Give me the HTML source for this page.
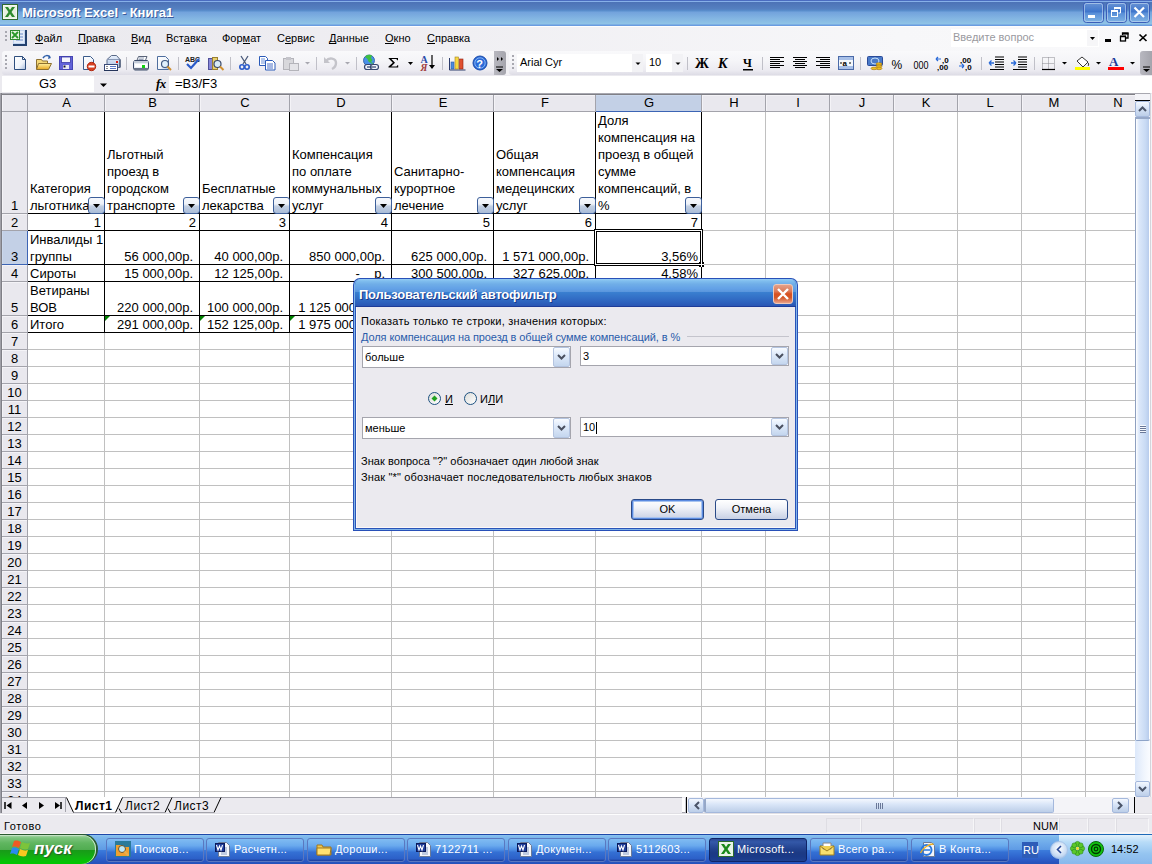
<!DOCTYPE html><html><head><meta charset="utf-8"><style>
*{box-sizing:border-box}
body{margin:0;width:1152px;height:864px;overflow:hidden;position:relative;background:#EBEAEF;font-family:"Liberation Sans",sans-serif;font-size:13px;color:#000}
.a{position:absolute}
.t{position:absolute;white-space:nowrap;line-height:17px}
.s{position:absolute;white-space:nowrap;line-height:15px;font-size:11px}
u{text-decoration:none;position:relative}u::after{content:'';position:absolute;left:0;right:0;bottom:0px;height:1px;background:currentColor}
svg{position:absolute;overflow:visible}
</style></head><body>
<div class="a" style="left:0;top:0;width:1152px;height:26px;background:linear-gradient(#4A6CC0 0,#4A6CC0 1px,#86B0E8 1px,#86B0E8 2px,#4C72B6 2px,#5580C0 9px,#5A90CE 11px,#72A2DC 12px,#82B4E2 18px,#90C4E6 24px,#6A9CE0 25px)"></div>
<div class="t" style="left:22px;top:4px;color:#fff;font-weight:bold;font-size:13px;text-shadow:1px 1px 0 #3A5A9A">Microsoft Excel - Книга1</div>
<svg style="left:0;top:0" width="1152" height="26">
<rect x="2.5" y="4.5" width="15" height="15" fill="#F4F8F0" stroke="#2F6A2F"/>
<rect x="4" y="6" width="12" height="12" fill="#E8F0E0"/>
<path d="M5 7h3l2 3 2-3h3l-3.5 5 3.5 5h-3l-2-3-2 3h-3l3.5-5z" fill="#2E8A2E"/>
<rect x="1083.5" y="2.5" width="20" height="20" rx="3" fill="url(#tb)" stroke="#3A5EB8"/><rect x="1084.5" y="3.5" width="18" height="18" rx="2" fill="none" stroke="#C8DCF4" stroke-opacity="0.6"/><rect x="1106.5" y="2.5" width="20" height="20" rx="3" fill="url(#tb)" stroke="#3A5EB8"/><rect x="1107.5" y="3.5" width="18" height="18" rx="2" fill="none" stroke="#C8DCF4" stroke-opacity="0.6"/><rect x="1129.5" y="2.5" width="20" height="20" rx="3" fill="url(#tb)" stroke="#3A5EB8"/><rect x="1130.5" y="3.5" width="18" height="18" rx="2" fill="none" stroke="#C8DCF4" stroke-opacity="0.6"/>
<defs><linearGradient id="tb" x1="0" y1="0" x2="0" y2="1"><stop offset="0" stop-color="#6A94D4"/><stop offset="0.45" stop-color="#3F76CC"/><stop offset="0.55" stop-color="#5A90D8"/><stop offset="1" stop-color="#80B4E4"/></linearGradient></defs>
<rect x="1088" y="15" width="7" height="3" fill="#fff"/>
<path d="M1114.5 9.5v-2h6v5.5h-2" fill="none" stroke="#fff" stroke-width="1"/><rect x="1114" y="7" width="7" height="2" fill="#fff"/>
<rect x="1111.5" y="11.5" width="6" height="5" fill="none" stroke="#fff" stroke-width="1"/><rect x="1111" y="10" width="7" height="2" fill="#fff"/>
<path d="M1134.5 7.5l9.5 9.5M1144 7.5l-9.5 9.5" stroke="#fff" stroke-width="2.2"/>
</svg>
<div class="a" style="left:0;top:26px;width:1152px;height:49px;background:linear-gradient(90deg,#EAE9EE 0,#EFEEF2 400px,#F7F7F9 900px,#F9F9FB)"></div>
<div class="a" style="left:0;top:26px;width:1152px;height:1px;background:#FDFDFD"></div>
<div class="s" style="left:35px;top:31px"><u>Ф</u>айл</div>
<div class="s" style="left:78px;top:31px"><u>П</u>равка</div>
<div class="s" style="left:131px;top:31px"><u>В</u>ид</div>
<div class="s" style="left:166px;top:31px">Вст<u>а</u>вка</div>
<div class="s" style="left:222px;top:31px">Фор<u>м</u>ат</div>
<div class="s" style="left:277px;top:31px">С<u>е</u>рвис</div>
<div class="s" style="left:329px;top:31px"><u>Д</u>анные</div>
<div class="s" style="left:385px;top:31px"><u>О</u>кно</div>
<div class="s" style="left:427px;top:31px"><u>С</u>правка</div>
<div class="a" style="left:951px;top:29px;width:148px;height:18px;background:#fff"></div>
<div class="a" style="left:1087px;top:30px;width:11px;height:16px;background:#F6F6F8"></div>
<div class="s" style="left:953px;top:30px;color:#9A9AA0">Введите вопрос</div>
<svg style="left:0;top:0" width="1152" height="50">
<g fill="#A8A8B0"><rect x="5" y="31" width="2" height="2"/><rect x="5" y="35" width="2" height="2"/><rect x="5" y="39" width="2" height="2"/></g>
<rect x="13" y="30" width="14" height="16" fill="#24416E"/>
<rect x="13" y="30" width="12" height="14" fill="#C4D6F0"/>
<rect x="14" y="31" width="10" height="12" fill="#E4ECF8"/>
<path d="M20 34h3M20 37h3M16 40h7" stroke="#6A8AC8"/>
<rect x="10" y="30" width="10" height="10" fill="#2F8A2F"/>
<rect x="11" y="31" width="8" height="8" fill="#E8F4E0"/>
<path d="M12 32l6 6M18 32l-6 6" stroke="#2A9A2A" stroke-width="1.8"/>
<path d="M1090 37h5l-2.5 3z" fill="#000"/>
<rect x="1105" y="39" width="6" height="3" fill="#000"/>
<rect x="1120.5" y="36.5" width="5" height="4.5" fill="none" stroke="#000" stroke-width="1.3"/>
<rect x="1120" y="35.5" width="6" height="1.6" fill="#000"/>
<path d="M1122.5 35v-2h5.5v5h-2" fill="none" stroke="#000" stroke-width="1.3"/><rect x="1122.5" y="33" width="6" height="1.6" fill="#000"/>
<path d="M1139.5 34.5l7 6.5M1146.5 34.5l-7 6.5" stroke="#000" stroke-width="1.7"/>
</svg>
<div class="a" style="left:2px;top:51px;width:504px;height:24px;border-radius:3px;background:linear-gradient(#F9F9FB 0,#F5F5F8 40%,#ECEBF1 80%,#DDDCE5)"></div>
<div class="a" style="left:494px;top:51px;width:12px;height:24px;border-radius:0 3px 3px 0;background:linear-gradient(90deg,#B8B8C0,#A4A4AC)"></div>
<div class="a" style="left:509px;top:51px;width:643px;height:24px;border-radius:3px 0 0 3px;background:linear-gradient(#F9F9FB 0,#F5F5F8 40%,#ECEBF1 80%,#DDDCE5)"></div>
<div class="a" style="left:1140px;top:51px;width:12px;height:24px;border-radius:3px 0 0 3px;background:linear-gradient(90deg,#B8B8C0,#A4A4AC)"></div>
<div class="a" style="left:517px;top:54px;width:126px;height:18px;background:#fff"></div>
<div class="a" style="left:632px;top:54px;width:11px;height:18px;background:#F2F2F5"></div>
<div class="s" style="left:520px;top:55px">Arial Cyr</div>
<div class="a" style="left:646px;top:54px;width:37px;height:18px;background:#fff"></div>
<div class="a" style="left:672px;top:54px;width:11px;height:18px;background:#F2F2F5"></div>
<div class="s" style="left:649px;top:55px">10</div>
<svg style="left:0;top:0" width="1152" height="80">
<defs>
<linearGradient id="pg" x1="0" y1="0" x2="1" y2="1"><stop offset="0" stop-color="#fff"/><stop offset="0.6" stop-color="#F0F4FA"/><stop offset="1" stop-color="#A8BCDC"/></linearGradient>
<linearGradient id="fold" x1="0" y1="0" x2="0" y2="1"><stop offset="0" stop-color="#FFF0A0"/><stop offset="1" stop-color="#E8A820"/></linearGradient>
<linearGradient id="blu" x1="0" y1="0" x2="0" y2="1"><stop offset="0" stop-color="#E8F0FC"/><stop offset="1" stop-color="#B0C4E4"/></linearGradient>
</defs>
<g fill="#A8A8B0"><rect x="5" y="55" width="2" height="2"/><rect x="5" y="59" width="2" height="2"/><rect x="5" y="63" width="2" height="2"/><rect x="5" y="67" width="2" height="2"/>
<rect x="512" y="55" width="2" height="2"/><rect x="512" y="59" width="2" height="2"/><rect x="512" y="63" width="2" height="2"/><rect x="512" y="67" width="2" height="2"/></g>
<!-- new -->
<path d="M14.5 56.5h8l3 3v10h-11z" fill="url(#pg)" stroke="#2E4E7E"/>
<path d="M22.5 56.5v3h3" fill="none" stroke="#2E4E7E"/>
<!-- open -->
<path d="M36.5 59.5h5l1 1.5h5v8h-11z" fill="#F4D878" stroke="#8C7030"/>
<path d="M38.5 63.5h13l-3 6h-12z" fill="url(#fold)" stroke="#8C7030"/>
<path d="M43 58c2-3 5-3 7-1" fill="none" stroke="#2E5EA8" stroke-width="1.5"/><path d="M49 55l2 3-3 1z" fill="#2E5EA8"/>
<!-- save -->
<rect x="59.5" y="56.5" width="13" height="13" fill="#6262D8" stroke="#4646B4"/>
<rect x="61.5" y="57" width="9" height="5.5" fill="#F4F4FC" stroke="#3A3AA8" stroke-width="0.8"/>
<rect x="63" y="65" width="6" height="4" fill="#E8E8F4"/><rect x="63.5" y="65.5" width="2" height="2" fill="#101030"/>
<!-- permission -->
<path d="M83.5 56.5h7l3 3v10h-10z" fill="url(#pg)" stroke="#3A5A8A"/>
<circle cx="91.5" cy="66.5" r="4.2" fill="#D84020" stroke="#B02810"/><rect x="88.5" y="65.5" width="6" height="2" fill="#fff"/>
<!-- email -->
<path d="M111.5 55.5h5l3.5 4v8h-13v-8z" fill="url(#blu)" stroke="#5A6A88"/>
<path d="M107 59.5h13" stroke="#8A9AB8"/>
<path d="M120 59.5v8" stroke="#2A3A5A"/>
<rect x="116" y="61" width="2" height="2" fill="#E02010"/>
<rect x="104.5" y="64.5" width="13" height="6" fill="#fff" stroke="#3A4A78"/>
<path d="M104 70.5h14" stroke="#24345A"/>
<rect x="106" y="66" width="2" height="1" fill="#8A8A90"/><rect x="106" y="68" width="2" height="1" fill="#8A8A90"/>
<path d="M110 66.5h6M110 68.5h6" stroke="#5A78C8"/>
<path d="M126.5 57v13" stroke="#C0C0C8"/>
<!-- print -->
<path d="M138.5 56.5h8.5l-2 5h-8.5z" fill="#FAFCFF" stroke="#5A6478"/>
<path d="M139 58h5M138.5 59.5h5" stroke="#9AA4B8"/>
<path d="M134.5 60.5h13l1 2v6l-1 1.5h-13l-1-1.5v-6z" fill="#E8ECF4" stroke="#3A4A68"/>
<rect x="134" y="61" width="14" height="2" fill="#C4CCD8"/>
<rect x="135" y="64" width="12" height="3" fill="#fff"/>
<rect x="134" y="68" width="14" height="2" fill="#6A7488"/>
<rect x="142" y="65" width="3" height="3" fill="#10D010"/>
<!-- preview -->
<path d="M157.5 56.5h8l3 3v10h-11z" fill="url(#pg)" stroke="#4E6E9E"/>
<circle cx="165" cy="64" r="3.5" fill="#E0F0FC" stroke="#405880" stroke-width="1.2"/>
<path d="M167.5 66.5l3.5 3.5" stroke="#D09030" stroke-width="2"/>
<path d="M178.5 57v13" stroke="#C0C0C8"/>
<!-- spell -->
<text x="185" y="62" font-family="Liberation Sans" font-size="7" font-weight="bold" fill="#222">ABC</text>
<path d="M187 64l4 4 8-9" fill="none" stroke="#2A5AC8" stroke-width="2.2"/>
<!-- research -->
<rect x="208.5" y="58.5" width="4" height="11" fill="#8888D8" stroke="#50509A"/>
<rect x="212.5" y="57.5" width="5" height="12" fill="#E8D070" stroke="#9A8030"/>
<circle cx="217.5" cy="64" r="3.5" fill="#D8ECF8" stroke="#3A4A6A" stroke-width="1.2"/>
<path d="M220 66.5l3.5 3.5" stroke="#D09030" stroke-width="2"/>
<path d="M230.5 57v13" stroke="#C0C0C8"/>
<!-- cut -->
<path d="M241 56l5 8M248 56l-5 8" stroke="#4A5A7A" stroke-width="1.3"/>
<circle cx="242" cy="67" r="2.2" fill="none" stroke="#2A5AC8" stroke-width="1.6"/><circle cx="247" cy="67" r="2.2" fill="none" stroke="#2A5AC8" stroke-width="1.6"/>
<!-- copy -->
<path d="M259.5 56.5h6l2 2v7h-8z" fill="#fff" stroke="#2A5AB8"/><path d="M261 59h4M261 61h4M261 63h4" stroke="#6A90D8"/>
<path d="M265.5 60.5h7l2.5 2.5v7h-9.5z" fill="#fff" stroke="#2A5AB8"/><path d="M267 64h6M267 66h6M267 68h6" stroke="#4A70C8"/>
<!-- paste disabled -->
<rect x="283.5" y="58.5" width="10" height="11" fill="#D8D8DC" stroke="#B4B4BA"/>
<rect x="286" y="57" width="5" height="3" fill="#C4C4CA"/>
<rect x="289.5" y="63.5" width="9" height="7" fill="#E4E4E8" stroke="#B4B4BA"/>
<path d="M305 62h5l-2.5 2.5z" fill="#A8A8B0"/>
<path d="M316.5 57v13" stroke="#C0C0C8"/>
<!-- undo disabled -->
<path d="M326 61c3-4 10-3 10 2 0 3-2 5-4 6" fill="none" stroke="#C4C4CA" stroke-width="2.4"/>
<path d="M324 57v6h6z" fill="#C4C4CA"/>
<path d="M345 62h5l-2.5 2.5z" fill="#A8A8B0"/>
<path d="M356.5 57v13" stroke="#C0C0C8"/>
<!-- hyperlink -->
<circle cx="369" cy="60.5" r="5.5" fill="#4A90E8" stroke="#2A5AA0" stroke-width="0.8"/>
<path d="M365 57c1.5-2.5 5-3 7-1.5l-1 2.5 1.5 2-2 3-2-1.5-1-2.5z" fill="#40C040"/>
<path d="M371 62l2 1-1 2z" fill="#40C040"/>
<rect x="364.5" y="64.5" width="8" height="5" rx="2.5" fill="#F0F4FC" stroke="#34466E" stroke-width="1.2"/>
<rect x="370.5" y="64.5" width="8" height="5" rx="2.5" fill="#F0F4FC" stroke="#34466E" stroke-width="1.2"/>
<path d="M367 67h9" stroke="#34466E" stroke-width="1.2"/>
<!-- sigma -->
<path d="M388.5 58h9.5v2.2h-0.8l-0.8-1.2h-5l3.6 3.7-3.8 3.8h5.4l0.8-1.3h0.8v2.3h-9.7v-0.9l4.3-3.9-4.3-4.4z" fill="#000"/>
<path d="M408 62h5l-2.5 3z" fill="#000"/>
<!-- sort -->
<text x="420.5" y="63" font-family="Liberation Serif" font-size="10" font-weight="bold" fill="#2A4AA8">A</text>
<text x="420.5" y="71" font-family="Liberation Serif" font-size="10" font-weight="bold" font-style="italic" fill="#A04040">Я</text>
<path d="M432 55v13" stroke="#000" stroke-width="1.2"/><path d="M429 65l3 4 3-4z" fill="#000"/>
<path d="M442.5 57v13" stroke="#C0C0C8"/>
<!-- chart -->
<path d="M449.5 58v12h16" fill="none" stroke="#2A3A6A"/>
<rect x="451" y="62" width="3" height="7" fill="#4A8AE0" stroke="#2A5AA8" stroke-width="0.6"/>
<rect x="455" y="57" width="3.5" height="12" fill="#F8D840" stroke="#A08020" stroke-width="0.6"/>
<rect x="459.5" y="59" width="3.5" height="10" fill="#E05030" stroke="#902010" stroke-width="0.6"/>
<!-- help -->
<circle cx="480" cy="63" r="7" fill="#2A6AD8" stroke="#1A4AA8"/>
<circle cx="480" cy="63" r="5.2" fill="none" stroke="#9CC4F8" stroke-width="0.8"/>
<text x="476.3" y="67.5" font-family="Liberation Sans" font-size="11" font-weight="bold" fill="#fff">?</text>
<!-- chevrons -->
<path d="M497 57l2 2-2 2zM501 57l2 2-2 2z" fill="#000"/>
<path d="M496 67h7" stroke="#000"/><path d="M496 69h7l-3.5 3z" fill="#000"/>
<path d="M1143 67h7" stroke="#000"/><path d="M1143 69h7l-3.5 3z" fill="#000"/>
<!-- font dropdown arrows -->
<path d="M635.5 62.5h5l-2.5 2.5z" fill="#000"/><path d="M675.5 62.5h5l-2.5 2.5z" fill="#000"/>
<path d="M687.5 57v13" stroke="#C0C0C8"/>
<!-- B I U -->
<text x="695" y="68" font-family="Liberation Serif" font-size="14" font-weight="bold" fill="#000">Ж</text>
<text x="718" y="68" font-family="Liberation Serif" font-size="14" font-weight="bold" font-style="italic" fill="#000">К</text>
<text x="743" y="67" font-family="Liberation Serif" font-size="12" font-weight="bold" fill="#000">Ч</text>
<rect x="743" y="69" width="10" height="1.5" fill="#000"/>
<path d="M762.5 57v13" stroke="#C0C0C8"/>
<!-- align -->
<g stroke="#000" stroke-width="1">
<path d="M770 57.5h14M770 59.5h10M770 61.5h14M770 63.5h10M770 65.5h14M770 67.5h10"/>
<path d="M793 57.5h14M795 59.5h10M793 61.5h14M795 63.5h10M793 65.5h14M795 67.5h10"/>
<path d="M816 57.5h14M820 59.5h10M816 61.5h14M820 63.5h10M816 65.5h14M820 67.5h10"/>
</g>
<!-- merge -->
<rect x="838.5" y="56.5" width="15" height="13" fill="#F4F8FC" stroke="#4A6AA8"/>
<rect x="839" y="57" width="14" height="3" fill="#A8C0E8"/><rect x="839" y="66" width="14" height="3" fill="#A8C0E8"/>
<text x="842.5" y="65.5" font-family="Liberation Sans" font-size="8" font-weight="bold" fill="#000">a</text>
<path d="M840 63h2M851 63h-2" stroke="#000"/>
<path d="M860.5 57v13" stroke="#C0C0C8"/>
<!-- currency -->
<rect x="867.5" y="56.5" width="15" height="9" rx="1" fill="#4A7AC8" stroke="#2A4A98"/>
<ellipse cx="875" cy="61" rx="4" ry="3" fill="none" stroke="#C8E0F8"/>
<g fill="#F0C020" stroke="#A07010" stroke-width="0.6"><ellipse cx="879" cy="64" rx="3" ry="1.3"/><ellipse cx="879" cy="66.2" rx="3" ry="1.3"/><ellipse cx="879" cy="68.4" rx="3" ry="1.3"/><ellipse cx="874" cy="68.4" rx="3" ry="1.3"/></g>
<!-- % 000 -->
<text x="891.5" y="68.5" font-family="Liberation Sans" font-size="12" fill="#000">%</text>
<text x="913.5" y="68.5" font-family="Liberation Sans" font-size="11" fill="#000" textLength="15" lengthAdjust="spacingAndGlyphs">000</text>
<!-- decimals -->
<text x="942" y="63" font-family="Liberation Sans" font-size="8" font-weight="bold" fill="#000">,0</text>
<text x="937" y="69.5" font-family="Liberation Sans" font-size="8" font-weight="bold" fill="#000">,00</text>
<path d="M936 59h5M936 59l2-2M936 59l2 2" stroke="#2A6AD8" stroke-width="1.2" fill="none"/>
<text x="960" y="63" font-family="Liberation Sans" font-size="8" font-weight="bold" fill="#000">,00</text>
<text x="965" y="69.5" font-family="Liberation Sans" font-size="8" font-weight="bold" fill="#000">,0</text>
<path d="M959 66h5M964 66l-2-2M964 66l-2 2" stroke="#2A6AD8" stroke-width="1.2" fill="none"/>
<path d="M981.5 57v13" stroke="#C0C0C8"/>
<!-- indent -->
<g stroke="#000" stroke-width="1.1"><path d="M995 57h9M995 59.5h9M995 62h9M995 64.5h9M995 67h9M990 69.5h14"/>
<path d="M1018 57h9M1018 59.5h9M1018 62h9M1018 64.5h9M1018 67h9M1013 69.5h14"/></g>
<path d="M989 63h5M989 63l2.5-2.5M989 63l2.5 2.5" stroke="#2A6AD8" stroke-width="1.3" fill="none"/>
<path d="M1011 63h5M1016 63l-2.5-2.5M1016 63l-2.5 2.5" stroke="#2A6AD8" stroke-width="1.3" fill="none"/>
<path d="M1034.5 57v13" stroke="#C0C0C8"/>
<!-- borders -->
<rect x="1042.5" y="57.5" width="12" height="12" fill="none" stroke="#8A8A90" stroke-dasharray="1 1"/>
<path d="M1048.5 57.5v12M1042.5 63.5h12" stroke="#8A8A90" stroke-dasharray="1 1"/>
<path d="M1042 69.5h13" stroke="#000" stroke-width="1.2"/>
<path d="M1062 62h5l-2.5 2.5z" fill="#000"/>
<!-- fill -->
<path d="M1077 61l5-4 6 5-5 5z" fill="#fff" stroke="#333"/>
<path d="M1087 62c2 1 2 3 1 4" fill="none" stroke="#333"/>
<rect x="1075" y="67" width="15" height="3" fill="#FFFF00"/>
<path d="M1096 62h5l-2.5 2.5z" fill="#000"/>
<!-- font color -->
<text x="1109" y="66" font-family="Liberation Serif" font-size="13" font-weight="bold" fill="#1A3A98">A</text>
<rect x="1108" y="67" width="16" height="3" fill="#FF0000"/>
<path d="M1130 62h5l-2.5 2.5z" fill="#000"/>
</svg>
<div class="a" style="left:2px;top:76px;width:92px;height:16px;background:#fff"></div>
<div class="a" style="left:94px;top:76px;width:16px;height:16px;background:#EEEDF2"></div>
<div class="t" style="left:39px;top:75px">G3</div>
<svg style="left:0;top:0" width="200" height="95"><path d="M100 83.5h7l-3.5 3.5z" fill="#000"/></svg>
<div class="a" style="left:169px;top:76px;width:983px;height:17px;background:#fff"></div>
<div class="t" style="left:175px;top:75px">=B3/F3</div>
<div class="t" style="left:156px;top:75px;font-size:13px;font-style:italic;font-weight:bold;font-family:'Liberation Serif',serif;letter-spacing:-0.5px">fx</div>
<div class="a" style="left:0;top:93px;width:1152px;height:704px;overflow:hidden">
<div class="a" style="left:2px;top:1px;width:1133px;height:703px;background:#fff"></div>
<div class="a" style="left:0;top:0;width:1151px;height:1px;background:#A8A8B0"></div>
<div class="a" style="left:1px;top:1px;width:1150px;height:1px;background:#7F7F86"></div>
<div class="a" style="left:0;top:0;width:1px;height:100%;background:#A0A0A8"></div>
<div class="a" style="left:1px;top:0;width:1px;height:100%;background:#7F7F86"></div>
<div class="a" style="left:2px;top:2px;width:1133px;height:17px;background:#E9E8EE;border-top:1px solid #F4F3F7"></div>
<div class="a" style="left:2px;top:2px;width:25px;height:702px;background:#E9E8EE;border-left:1px solid #F4F3F7"></div>
<div class="a" style="left:104px;top:19px;width:1px;height:800px;background:#C0C0C0"></div>
<div class="a" style="left:199px;top:19px;width:1px;height:800px;background:#C0C0C0"></div>
<div class="a" style="left:289px;top:19px;width:1px;height:800px;background:#C0C0C0"></div>
<div class="a" style="left:391px;top:19px;width:1px;height:800px;background:#C0C0C0"></div>
<div class="a" style="left:493px;top:19px;width:1px;height:800px;background:#C0C0C0"></div>
<div class="a" style="left:595px;top:19px;width:1px;height:800px;background:#C0C0C0"></div>
<div class="a" style="left:701px;top:19px;width:1px;height:800px;background:#C0C0C0"></div>
<div class="a" style="left:765px;top:19px;width:1px;height:800px;background:#C0C0C0"></div>
<div class="a" style="left:829px;top:19px;width:1px;height:800px;background:#C0C0C0"></div>
<div class="a" style="left:893px;top:19px;width:1px;height:800px;background:#C0C0C0"></div>
<div class="a" style="left:957px;top:19px;width:1px;height:800px;background:#C0C0C0"></div>
<div class="a" style="left:1021px;top:19px;width:1px;height:800px;background:#C0C0C0"></div>
<div class="a" style="left:1085px;top:19px;width:1px;height:800px;background:#C0C0C0"></div>
<div class="a" style="left:1149px;top:19px;width:1px;height:800px;background:#C0C0C0"></div>
<div class="a" style="left:28px;top:120px;width:1107px;height:1px;background:#C0C0C0"></div>
<div class="a" style="left:28px;top:137px;width:1107px;height:1px;background:#C0C0C0"></div>
<div class="a" style="left:28px;top:171px;width:1107px;height:1px;background:#C0C0C0"></div>
<div class="a" style="left:28px;top:188px;width:1107px;height:1px;background:#C0C0C0"></div>
<div class="a" style="left:28px;top:222px;width:1107px;height:1px;background:#C0C0C0"></div>
<div class="a" style="left:28px;top:239px;width:1107px;height:1px;background:#C0C0C0"></div>
<div class="a" style="left:28px;top:256px;width:1107px;height:1px;background:#C0C0C0"></div>
<div class="a" style="left:28px;top:273px;width:1107px;height:1px;background:#C0C0C0"></div>
<div class="a" style="left:28px;top:290px;width:1107px;height:1px;background:#C0C0C0"></div>
<div class="a" style="left:28px;top:307px;width:1107px;height:1px;background:#C0C0C0"></div>
<div class="a" style="left:28px;top:324px;width:1107px;height:1px;background:#C0C0C0"></div>
<div class="a" style="left:28px;top:341px;width:1107px;height:1px;background:#C0C0C0"></div>
<div class="a" style="left:28px;top:358px;width:1107px;height:1px;background:#C0C0C0"></div>
<div class="a" style="left:28px;top:375px;width:1107px;height:1px;background:#C0C0C0"></div>
<div class="a" style="left:28px;top:392px;width:1107px;height:1px;background:#C0C0C0"></div>
<div class="a" style="left:28px;top:409px;width:1107px;height:1px;background:#C0C0C0"></div>
<div class="a" style="left:28px;top:426px;width:1107px;height:1px;background:#C0C0C0"></div>
<div class="a" style="left:28px;top:443px;width:1107px;height:1px;background:#C0C0C0"></div>
<div class="a" style="left:28px;top:460px;width:1107px;height:1px;background:#C0C0C0"></div>
<div class="a" style="left:28px;top:477px;width:1107px;height:1px;background:#C0C0C0"></div>
<div class="a" style="left:28px;top:494px;width:1107px;height:1px;background:#C0C0C0"></div>
<div class="a" style="left:28px;top:511px;width:1107px;height:1px;background:#C0C0C0"></div>
<div class="a" style="left:28px;top:528px;width:1107px;height:1px;background:#C0C0C0"></div>
<div class="a" style="left:28px;top:545px;width:1107px;height:1px;background:#C0C0C0"></div>
<div class="a" style="left:28px;top:562px;width:1107px;height:1px;background:#C0C0C0"></div>
<div class="a" style="left:28px;top:579px;width:1107px;height:1px;background:#C0C0C0"></div>
<div class="a" style="left:28px;top:596px;width:1107px;height:1px;background:#C0C0C0"></div>
<div class="a" style="left:28px;top:613px;width:1107px;height:1px;background:#C0C0C0"></div>
<div class="a" style="left:28px;top:630px;width:1107px;height:1px;background:#C0C0C0"></div>
<div class="a" style="left:28px;top:647px;width:1107px;height:1px;background:#C0C0C0"></div>
<div class="a" style="left:28px;top:664px;width:1107px;height:1px;background:#C0C0C0"></div>
<div class="a" style="left:28px;top:681px;width:1107px;height:1px;background:#C0C0C0"></div>
<div class="a" style="left:28px;top:698px;width:1107px;height:1px;background:#C0C0C0"></div>
<div class="a" style="left:28px;top:715px;width:1107px;height:1px;background:#C0C0C0"></div>
<div class="a" style="left:104px;top:2px;width:1px;height:17px;background:#A3A3AB"></div>
<div class="a" style="left:105px;top:2px;width:1px;height:16px;background:#F4F3F7"></div>
<div class="t" style="left:28px;top:1px;width:77px;text-align:center">A</div>
<div class="a" style="left:199px;top:2px;width:1px;height:17px;background:#A3A3AB"></div>
<div class="a" style="left:200px;top:2px;width:1px;height:16px;background:#F4F3F7"></div>
<div class="t" style="left:105px;top:1px;width:95px;text-align:center">B</div>
<div class="a" style="left:289px;top:2px;width:1px;height:17px;background:#A3A3AB"></div>
<div class="a" style="left:290px;top:2px;width:1px;height:16px;background:#F4F3F7"></div>
<div class="t" style="left:200px;top:1px;width:90px;text-align:center">C</div>
<div class="a" style="left:391px;top:2px;width:1px;height:17px;background:#A3A3AB"></div>
<div class="a" style="left:392px;top:2px;width:1px;height:16px;background:#F4F3F7"></div>
<div class="t" style="left:290px;top:1px;width:102px;text-align:center">D</div>
<div class="a" style="left:493px;top:2px;width:1px;height:17px;background:#A3A3AB"></div>
<div class="a" style="left:494px;top:2px;width:1px;height:16px;background:#F4F3F7"></div>
<div class="t" style="left:392px;top:1px;width:102px;text-align:center">E</div>
<div class="a" style="left:595px;top:2px;width:1px;height:17px;background:#A3A3AB"></div>
<div class="a" style="left:596px;top:2px;width:1px;height:16px;background:#F4F3F7"></div>
<div class="t" style="left:494px;top:1px;width:102px;text-align:center">F</div>
<div class="a" style="left:596px;top:2px;width:105px;height:17px;background:#C3D0E6;border-top:1px solid #CBD8EC"></div>
<div class="a" style="left:701px;top:2px;width:1px;height:17px;background:#A3A3AB"></div>
<div class="a" style="left:702px;top:2px;width:1px;height:16px;background:#F4F3F7"></div>
<div class="t" style="left:596px;top:1px;width:106px;text-align:center">G</div>
<div class="a" style="left:765px;top:2px;width:1px;height:17px;background:#A3A3AB"></div>
<div class="a" style="left:766px;top:2px;width:1px;height:16px;background:#F4F3F7"></div>
<div class="t" style="left:702px;top:1px;width:64px;text-align:center">H</div>
<div class="a" style="left:829px;top:2px;width:1px;height:17px;background:#A3A3AB"></div>
<div class="a" style="left:830px;top:2px;width:1px;height:16px;background:#F4F3F7"></div>
<div class="t" style="left:766px;top:1px;width:64px;text-align:center">I</div>
<div class="a" style="left:893px;top:2px;width:1px;height:17px;background:#A3A3AB"></div>
<div class="a" style="left:894px;top:2px;width:1px;height:16px;background:#F4F3F7"></div>
<div class="t" style="left:830px;top:1px;width:64px;text-align:center">J</div>
<div class="a" style="left:957px;top:2px;width:1px;height:17px;background:#A3A3AB"></div>
<div class="a" style="left:958px;top:2px;width:1px;height:16px;background:#F4F3F7"></div>
<div class="t" style="left:894px;top:1px;width:64px;text-align:center">K</div>
<div class="a" style="left:1021px;top:2px;width:1px;height:17px;background:#A3A3AB"></div>
<div class="a" style="left:1022px;top:2px;width:1px;height:16px;background:#F4F3F7"></div>
<div class="t" style="left:958px;top:1px;width:64px;text-align:center">L</div>
<div class="a" style="left:1085px;top:2px;width:1px;height:17px;background:#A3A3AB"></div>
<div class="a" style="left:1086px;top:2px;width:1px;height:16px;background:#F4F3F7"></div>
<div class="t" style="left:1022px;top:1px;width:64px;text-align:center">M</div>
<div class="a" style="left:1149px;top:2px;width:1px;height:17px;background:#A3A3AB"></div>
<div class="t" style="left:1086px;top:1px;width:64px;text-align:center">N</div>
<div class="a" style="left:27px;top:2px;width:1px;height:704px;background:#A3A3AB"></div>
<div class="a" style="left:2px;top:18px;width:1133px;height:1px;background:#A3A3AB"></div>
<div class="a" style="left:596px;top:18px;width:105px;height:1px;background:#3C64B4"></div>
<div class="a" style="left:2px;top:120px;width:25px;height:1px;background:#A3A3AB"></div>
<div class="a" style="left:2px;top:121px;width:25px;height:1px;background:#F4F3F7"></div>
<div class="t" style="left:2px;top:104px;width:25px;text-align:center">1</div>
<div class="a" style="left:2px;top:137px;width:25px;height:1px;background:#A3A3AB"></div>
<div class="a" style="left:2px;top:138px;width:25px;height:1px;background:#F4F3F7"></div>
<div class="t" style="left:2px;top:121px;width:25px;text-align:center">2</div>
<div class="a" style="left:2px;top:138px;width:25px;height:33px;background:#C3D0E6;border-left:1px solid #CBD8EC"></div>
<div class="a" style="left:27px;top:138px;width:1px;height:34px;background:#3C64B4"></div>
<div class="a" style="left:2px;top:171px;width:26px;height:1px;background:#3C64B4"></div>
<div class="a" style="left:2px;top:172px;width:25px;height:1px;background:#F4F3F7"></div>
<div class="t" style="left:2px;top:155px;width:25px;text-align:center">3</div>
<div class="a" style="left:2px;top:188px;width:25px;height:1px;background:#A3A3AB"></div>
<div class="a" style="left:2px;top:189px;width:25px;height:1px;background:#F4F3F7"></div>
<div class="t" style="left:2px;top:172px;width:25px;text-align:center">4</div>
<div class="a" style="left:2px;top:222px;width:25px;height:1px;background:#A3A3AB"></div>
<div class="a" style="left:2px;top:223px;width:25px;height:1px;background:#F4F3F7"></div>
<div class="t" style="left:2px;top:206px;width:25px;text-align:center">5</div>
<div class="a" style="left:2px;top:239px;width:25px;height:1px;background:#A3A3AB"></div>
<div class="a" style="left:2px;top:240px;width:25px;height:1px;background:#F4F3F7"></div>
<div class="t" style="left:2px;top:223px;width:25px;text-align:center">6</div>
<div class="a" style="left:2px;top:256px;width:25px;height:1px;background:#A3A3AB"></div>
<div class="a" style="left:2px;top:257px;width:25px;height:1px;background:#F4F3F7"></div>
<div class="t" style="left:2px;top:240px;width:25px;text-align:center">7</div>
<div class="a" style="left:2px;top:273px;width:25px;height:1px;background:#A3A3AB"></div>
<div class="a" style="left:2px;top:274px;width:25px;height:1px;background:#F4F3F7"></div>
<div class="t" style="left:2px;top:257px;width:25px;text-align:center">8</div>
<div class="a" style="left:2px;top:290px;width:25px;height:1px;background:#A3A3AB"></div>
<div class="a" style="left:2px;top:291px;width:25px;height:1px;background:#F4F3F7"></div>
<div class="t" style="left:2px;top:274px;width:25px;text-align:center">9</div>
<div class="a" style="left:2px;top:307px;width:25px;height:1px;background:#A3A3AB"></div>
<div class="a" style="left:2px;top:308px;width:25px;height:1px;background:#F4F3F7"></div>
<div class="t" style="left:2px;top:291px;width:25px;text-align:center">10</div>
<div class="a" style="left:2px;top:324px;width:25px;height:1px;background:#A3A3AB"></div>
<div class="a" style="left:2px;top:325px;width:25px;height:1px;background:#F4F3F7"></div>
<div class="t" style="left:2px;top:308px;width:25px;text-align:center">11</div>
<div class="a" style="left:2px;top:341px;width:25px;height:1px;background:#A3A3AB"></div>
<div class="a" style="left:2px;top:342px;width:25px;height:1px;background:#F4F3F7"></div>
<div class="t" style="left:2px;top:325px;width:25px;text-align:center">12</div>
<div class="a" style="left:2px;top:358px;width:25px;height:1px;background:#A3A3AB"></div>
<div class="a" style="left:2px;top:359px;width:25px;height:1px;background:#F4F3F7"></div>
<div class="t" style="left:2px;top:342px;width:25px;text-align:center">13</div>
<div class="a" style="left:2px;top:375px;width:25px;height:1px;background:#A3A3AB"></div>
<div class="a" style="left:2px;top:376px;width:25px;height:1px;background:#F4F3F7"></div>
<div class="t" style="left:2px;top:359px;width:25px;text-align:center">14</div>
<div class="a" style="left:2px;top:392px;width:25px;height:1px;background:#A3A3AB"></div>
<div class="a" style="left:2px;top:393px;width:25px;height:1px;background:#F4F3F7"></div>
<div class="t" style="left:2px;top:376px;width:25px;text-align:center">15</div>
<div class="a" style="left:2px;top:409px;width:25px;height:1px;background:#A3A3AB"></div>
<div class="a" style="left:2px;top:410px;width:25px;height:1px;background:#F4F3F7"></div>
<div class="t" style="left:2px;top:393px;width:25px;text-align:center">16</div>
<div class="a" style="left:2px;top:426px;width:25px;height:1px;background:#A3A3AB"></div>
<div class="a" style="left:2px;top:427px;width:25px;height:1px;background:#F4F3F7"></div>
<div class="t" style="left:2px;top:410px;width:25px;text-align:center">17</div>
<div class="a" style="left:2px;top:443px;width:25px;height:1px;background:#A3A3AB"></div>
<div class="a" style="left:2px;top:444px;width:25px;height:1px;background:#F4F3F7"></div>
<div class="t" style="left:2px;top:427px;width:25px;text-align:center">18</div>
<div class="a" style="left:2px;top:460px;width:25px;height:1px;background:#A3A3AB"></div>
<div class="a" style="left:2px;top:461px;width:25px;height:1px;background:#F4F3F7"></div>
<div class="t" style="left:2px;top:444px;width:25px;text-align:center">19</div>
<div class="a" style="left:2px;top:477px;width:25px;height:1px;background:#A3A3AB"></div>
<div class="a" style="left:2px;top:478px;width:25px;height:1px;background:#F4F3F7"></div>
<div class="t" style="left:2px;top:461px;width:25px;text-align:center">20</div>
<div class="a" style="left:2px;top:494px;width:25px;height:1px;background:#A3A3AB"></div>
<div class="a" style="left:2px;top:495px;width:25px;height:1px;background:#F4F3F7"></div>
<div class="t" style="left:2px;top:478px;width:25px;text-align:center">21</div>
<div class="a" style="left:2px;top:511px;width:25px;height:1px;background:#A3A3AB"></div>
<div class="a" style="left:2px;top:512px;width:25px;height:1px;background:#F4F3F7"></div>
<div class="t" style="left:2px;top:495px;width:25px;text-align:center">22</div>
<div class="a" style="left:2px;top:528px;width:25px;height:1px;background:#A3A3AB"></div>
<div class="a" style="left:2px;top:529px;width:25px;height:1px;background:#F4F3F7"></div>
<div class="t" style="left:2px;top:512px;width:25px;text-align:center">23</div>
<div class="a" style="left:2px;top:545px;width:25px;height:1px;background:#A3A3AB"></div>
<div class="a" style="left:2px;top:546px;width:25px;height:1px;background:#F4F3F7"></div>
<div class="t" style="left:2px;top:529px;width:25px;text-align:center">24</div>
<div class="a" style="left:2px;top:562px;width:25px;height:1px;background:#A3A3AB"></div>
<div class="a" style="left:2px;top:563px;width:25px;height:1px;background:#F4F3F7"></div>
<div class="t" style="left:2px;top:546px;width:25px;text-align:center">25</div>
<div class="a" style="left:2px;top:579px;width:25px;height:1px;background:#A3A3AB"></div>
<div class="a" style="left:2px;top:580px;width:25px;height:1px;background:#F4F3F7"></div>
<div class="t" style="left:2px;top:563px;width:25px;text-align:center">26</div>
<div class="a" style="left:2px;top:596px;width:25px;height:1px;background:#A3A3AB"></div>
<div class="a" style="left:2px;top:597px;width:25px;height:1px;background:#F4F3F7"></div>
<div class="t" style="left:2px;top:580px;width:25px;text-align:center">27</div>
<div class="a" style="left:2px;top:613px;width:25px;height:1px;background:#A3A3AB"></div>
<div class="a" style="left:2px;top:614px;width:25px;height:1px;background:#F4F3F7"></div>
<div class="t" style="left:2px;top:597px;width:25px;text-align:center">28</div>
<div class="a" style="left:2px;top:630px;width:25px;height:1px;background:#A3A3AB"></div>
<div class="a" style="left:2px;top:631px;width:25px;height:1px;background:#F4F3F7"></div>
<div class="t" style="left:2px;top:614px;width:25px;text-align:center">29</div>
<div class="a" style="left:2px;top:647px;width:25px;height:1px;background:#A3A3AB"></div>
<div class="a" style="left:2px;top:648px;width:25px;height:1px;background:#F4F3F7"></div>
<div class="t" style="left:2px;top:631px;width:25px;text-align:center">30</div>
<div class="a" style="left:2px;top:664px;width:25px;height:1px;background:#A3A3AB"></div>
<div class="a" style="left:2px;top:665px;width:25px;height:1px;background:#F4F3F7"></div>
<div class="t" style="left:2px;top:648px;width:25px;text-align:center">31</div>
<div class="a" style="left:2px;top:681px;width:25px;height:1px;background:#A3A3AB"></div>
<div class="a" style="left:2px;top:682px;width:25px;height:1px;background:#F4F3F7"></div>
<div class="t" style="left:2px;top:665px;width:25px;text-align:center">32</div>
<div class="a" style="left:2px;top:698px;width:25px;height:1px;background:#A3A3AB"></div>
<div class="a" style="left:2px;top:699px;width:25px;height:1px;background:#F4F3F7"></div>
<div class="t" style="left:2px;top:682px;width:25px;text-align:center">33</div>
<div class="a" style="left:2px;top:715px;width:25px;height:1px;background:#A3A3AB"></div>
<div class="a" style="left:2px;top:716px;width:25px;height:1px;background:#F4F3F7"></div>
<div class="t" style="left:2px;top:699px;width:25px;text-align:center">34</div>
<div class="t" style="left:30px;top:87px;">Категория</div>
<div class="t" style="left:30px;top:104px;">льготника</div>
<div class="t" style="left:107px;top:53px;">Льготный</div>
<div class="t" style="left:107px;top:70px;">проезд в</div>
<div class="t" style="left:107px;top:87px;">городском</div>
<div class="t" style="left:107px;top:104px;">транспорте</div>
<div class="t" style="left:202px;top:87px;">Бесплатные</div>
<div class="t" style="left:202px;top:104px;">лекарства</div>
<div class="t" style="left:292px;top:53px;">Компенсация</div>
<div class="t" style="left:292px;top:70px;">по оплате</div>
<div class="t" style="left:292px;top:87px;">коммунальных</div>
<div class="t" style="left:292px;top:104px;">услуг</div>
<div class="t" style="left:394px;top:70px;">Санитарно-</div>
<div class="t" style="left:394px;top:87px;">курортное</div>
<div class="t" style="left:394px;top:104px;">лечение</div>
<div class="t" style="left:496px;top:53px;">Общая</div>
<div class="t" style="left:496px;top:70px;">компенсация</div>
<div class="t" style="left:496px;top:87px;">медецинских</div>
<div class="t" style="left:496px;top:104px;">услуг</div>
<div class="t" style="left:598px;top:19px;">Доля</div>
<div class="t" style="left:598px;top:36px;">компенсация на</div>
<div class="t" style="left:598px;top:53px;">проезд в общей</div>
<div class="t" style="left:598px;top:70px;">сумме</div>
<div class="t" style="left:598px;top:87px;">компенсаций, в</div>
<div class="t" style="left:598px;top:104px;">%</div>
<div class="t" style="left:-173px;top:121px;width:274px;text-align:right;">1</div>
<div class="t" style="left:-96px;top:121px;width:292px;text-align:right;">2</div>
<div class="t" style="left:-1px;top:121px;width:287px;text-align:right;">3</div>
<div class="t" style="left:89px;top:121px;width:299px;text-align:right;">4</div>
<div class="t" style="left:191px;top:121px;width:299px;text-align:right;">5</div>
<div class="t" style="left:293px;top:121px;width:299px;text-align:right;">6</div>
<div class="t" style="left:395px;top:121px;width:303px;text-align:right;">7</div>
<div class="t" style="left:30px;top:138px;">Инвалиды 1</div>
<div class="t" style="left:30px;top:155px;">группы</div>
<div class="t" style="left:-96px;top:155px;width:289px;text-align:right;">56 000,00р.</div>
<div class="t" style="left:-1px;top:155px;width:284px;text-align:right;">40 000,00р.</div>
<div class="t" style="left:89px;top:155px;width:296px;text-align:right;">850 000,00р.</div>
<div class="t" style="left:191px;top:155px;width:296px;text-align:right;">625 000,00р.</div>
<div class="t" style="left:293px;top:155px;width:296px;text-align:right;">1 571 000,00р.</div>
<div class="t" style="left:395px;top:155px;width:303px;text-align:right;">3,56%</div>
<div class="t" style="left:30px;top:172px;">Сироты</div>
<div class="t" style="left:-96px;top:172px;width:289px;text-align:right;">15 000,00р.</div>
<div class="t" style="left:-1px;top:172px;width:284px;text-align:right;">12 125,00р.</div>
<div class="t" style="left:89px;top:172px;width:296px;text-align:right;">-&nbsp;&nbsp;&nbsp;&nbsp;р.</div>
<div class="t" style="left:191px;top:172px;width:296px;text-align:right;">300 500,00р.</div>
<div class="t" style="left:293px;top:172px;width:296px;text-align:right;">327 625,00р.</div>
<div class="t" style="left:395px;top:172px;width:303px;text-align:right;">4,58%</div>
<div class="t" style="left:30px;top:189px;">Ветираны</div>
<div class="t" style="left:30px;top:206px;">ВОВ</div>
<div class="t" style="left:-96px;top:206px;width:289px;text-align:right;">220 000,00р.</div>
<div class="t" style="left:-1px;top:206px;width:284px;text-align:right;">100 000,00р.</div>
<div class="t" style="left:89px;top:206px;width:296px;text-align:right;">1 125 000,00р.</div>
<div class="t" style="left:30px;top:223px;">Итого</div>
<div class="t" style="left:-96px;top:223px;width:289px;text-align:right;">291 000,00р.</div>
<div class="t" style="left:-1px;top:223px;width:284px;text-align:right;">152 125,00р.</div>
<div class="t" style="left:89px;top:223px;width:296px;text-align:right;">1 975 000,00р.</div>
<div class="a" style="left:104px;top:19px;width:1px;height:221px;background:#000"></div>
<div class="a" style="left:199px;top:19px;width:1px;height:221px;background:#000"></div>
<div class="a" style="left:289px;top:19px;width:1px;height:221px;background:#000"></div>
<div class="a" style="left:391px;top:19px;width:1px;height:221px;background:#000"></div>
<div class="a" style="left:493px;top:19px;width:1px;height:221px;background:#000"></div>
<div class="a" style="left:595px;top:19px;width:1px;height:221px;background:#000"></div>
<div class="a" style="left:701px;top:19px;width:1px;height:221px;background:#000"></div>
<div class="a" style="left:28px;top:120px;width:674px;height:1px;background:#000"></div>
<div class="a" style="left:28px;top:137px;width:674px;height:1px;background:#000"></div>
<div class="a" style="left:28px;top:171px;width:674px;height:1px;background:#000"></div>
<div class="a" style="left:28px;top:188px;width:674px;height:1px;background:#000"></div>
<div class="a" style="left:28px;top:222px;width:674px;height:1px;background:#000"></div>
<div class="a" style="left:28px;top:239px;width:674px;height:1px;background:#000"></div>
<svg style="left:105px;top:223px" width="6" height="6"><path d="M0 0H5L0 5Z" fill="#008000"/></svg>
<svg style="left:200px;top:223px" width="6" height="6"><path d="M0 0H5L0 5Z" fill="#008000"/></svg>
<svg style="left:290px;top:223px" width="6" height="6"><path d="M0 0H5L0 5Z" fill="#008000"/></svg>
<div class="a" style="left:88px;top:104px;width:17px;height:17px;border:1px solid #3D5F9A;border-radius:3px;background:linear-gradient(#F6F8FC,#EEF2F9 40%,#C3D0E3 55%,#A9BCD8)"></div>
<svg style="left:93px;top:111px" width="7" height="4"><path d="M0 0H7L3.5 4Z" fill="#000"/></svg>
<div class="a" style="left:183px;top:104px;width:17px;height:17px;border:1px solid #3D5F9A;border-radius:3px;background:linear-gradient(#F6F8FC,#EEF2F9 40%,#C3D0E3 55%,#A9BCD8)"></div>
<svg style="left:188px;top:111px" width="7" height="4"><path d="M0 0H7L3.5 4Z" fill="#000"/></svg>
<div class="a" style="left:273px;top:104px;width:17px;height:17px;border:1px solid #3D5F9A;border-radius:3px;background:linear-gradient(#F6F8FC,#EEF2F9 40%,#C3D0E3 55%,#A9BCD8)"></div>
<svg style="left:278px;top:111px" width="7" height="4"><path d="M0 0H7L3.5 4Z" fill="#000"/></svg>
<div class="a" style="left:375px;top:104px;width:17px;height:17px;border:1px solid #3D5F9A;border-radius:3px;background:linear-gradient(#F6F8FC,#EEF2F9 40%,#C3D0E3 55%,#A9BCD8)"></div>
<svg style="left:380px;top:111px" width="7" height="4"><path d="M0 0H7L3.5 4Z" fill="#000"/></svg>
<div class="a" style="left:477px;top:104px;width:17px;height:17px;border:1px solid #3D5F9A;border-radius:3px;background:linear-gradient(#F6F8FC,#EEF2F9 40%,#C3D0E3 55%,#A9BCD8)"></div>
<svg style="left:482px;top:111px" width="7" height="4"><path d="M0 0H7L3.5 4Z" fill="#000"/></svg>
<div class="a" style="left:579px;top:104px;width:17px;height:17px;border:1px solid #3D5F9A;border-radius:3px;background:linear-gradient(#F6F8FC,#EEF2F9 40%,#C3D0E3 55%,#A9BCD8)"></div>
<svg style="left:584px;top:111px" width="7" height="4"><path d="M0 0H7L3.5 4Z" fill="#000"/></svg>
<div class="a" style="left:685px;top:104px;width:17px;height:17px;border:1px solid #3D5F9A;border-radius:3px;background:linear-gradient(#F6F8FC,#EEF2F9 40%,#C3D0E3 55%,#A9BCD8)"></div>
<svg style="left:690px;top:111px" width="7" height="4"><path d="M0 0H7L3.5 4Z" fill="#000"/></svg>
<div class="a" style="left:594px;top:136px;width:109px;height:37px;border:3px solid #000"></div>
<div class="a" style="left:595px;top:137px;width:107px;height:35px;border:1px solid #fff"></div>
<div class="a" style="left:699px;top:169px;width:5px;height:5px;background:#000"></div>
<div class="a" style="left:701px;top:169px;width:1px;height:5px;background:#fff"></div>
<div class="a" style="left:699px;top:171px;width:5px;height:1px;background:#fff"></div>
</div>
<div class="a" style="left:1135px;top:94px;width:17px;height:703px;background:#F4F4F8"></div>
<div class="a" style="left:1150px;top:93px;width:1px;height:704px;background:#D4D4DA"></div>
<div class="a" style="left:1135px;top:100px;width:15px;height:1px;background:#000"></div>
<div class="a" style="left:1135px;top:101px;width:15px;height:16px;border-radius:2px;border:1px solid #A4B8DC;background:linear-gradient(#F4F8FE,#DAE6F8 40%,#BCCEE8)"></div>
<div class="a" style="left:1135px;top:117px;width:15px;height:2px;background:#96A8C8"></div>
<div class="a" style="left:1135px;top:119px;width:15px;height:662px;background:linear-gradient(90deg,#DCE8FA,#F0F5FD 60%,#FAFCFF)"></div>
<div class="a" style="left:1135px;top:119px;width:15px;height:622px;border-radius:0 0 2px 2px;border-bottom:1px solid #8EA4C8;background:linear-gradient(90deg,#8EA0C0 0,#8EA0C0 1px,#fff 1px,#DCE8FA 4px,#C8DAF4 70%,#B8CCEC 93%,#fff 93%)"></div>
<div class="a" style="left:1135px;top:781px;width:15px;height:16px;border-radius:2px;border:1px solid #A4B8DC;background:linear-gradient(#F4F8FE,#DAE6F8 40%,#BCCEE8)"></div>
<svg style="left:0;top:0" width="1152" height="864">
<path d="M1139 111l3.5-3.5 3.5 3.5" fill="none" stroke="#4A5468" stroke-width="2"/>
<path d="M1139 787l3.5 3.5 3.5-3.5" fill="none" stroke="#4A5468" stroke-width="2"/>
<path d="M1140 426.5h6M1140 428.5h6M1140 430.5h6M1140 432.5h6" stroke="#6A7898"/><path d="M1140 425.5h6M1140 427.5h6M1140 429.5h6M1140 431.5h6" stroke="#fff" stroke-opacity="0.8"/>
</svg>
<div class="a" style="left:0;top:797px;width:1152px;height:17px;background:#EBEAEF"></div>
<div class="a" style="left:0;top:797px;width:1px;height:17px;background:#A0A0A8"></div><div class="a" style="left:1px;top:797px;width:1px;height:17px;background:#7F7F86"></div>
<div class="a" style="left:2px;top:797px;width:680px;height:1px;background:#A3A3AB"></div>
<div class="a" style="left:682px;top:798px;width:4px;height:15px;background:#fff;border-right:1px solid #C8C8CE;border-bottom:1px solid #A8A8B0"></div>
<div class="a" style="left:65px;top:797px;width:1px;height:15px;background:#A3A3AB"></div>
<svg style="left:0;top:0" width="1152" height="864">
<path d="M5 802v7" stroke="#000" stroke-width="1.5"/><path d="M11.5 802v7l-5-3.5z" fill="#000"/>
<path d="M27 802v7l-5-3.5z" fill="#000"/>
<path d="M39 802v7l5-3.5z" fill="#000"/>
<path d="M55 802v7l5-3.5z" fill="#000"/><path d="M61 802v7" stroke="#000" stroke-width="1.5"/>
<path d="M66 797l7.5 15.5h41.5l7.5-15.5z" fill="#fff"/>
<path d="M121.5 812.5h43M171 812.5h42.5" stroke="#A3A3AB"/>
<path d="M73.5 812.5h41.5" stroke="#A8A8B0"/>
<path d="M66.5 797.5l7 15" fill="none" stroke="#000"/>
<path d="M122.5 797.5l-7 15" fill="none" stroke="#000"/>
<path d="M119 808.5l2.5 4.5" fill="none" stroke="#000"/>
<path d="M172 797.5l-7 15" fill="none" stroke="#000"/>
<path d="M168 808.5l2.5 4.5" fill="none" stroke="#000"/>
<path d="M221 797.5l-7 15" fill="none" stroke="#000"/>
</svg>
<div class="t" style="left:75px;top:798px;font-weight:bold;font-size:12px;letter-spacing:0.5px">Лист1</div>
<div class="t" style="left:125px;top:798px;font-size:12px;letter-spacing:0.5px">Лист2</div>
<div class="t" style="left:174px;top:798px;font-size:12px;letter-spacing:0.5px">Лист3</div>
<div class="a" style="left:687px;top:797px;width:448px;height:16px;background:#F4F4F8"></div>
<div class="a" style="left:686px;top:797px;width:1px;height:16px;background:#000"></div>
<div class="a" style="left:688px;top:798px;width:16px;height:15px;border-radius:2px;border:1px solid #A4B8DC;background:linear-gradient(#F4F8FE,#DAE6F8 40%,#BCCEE8)"></div>
<div class="a" style="left:704px;top:798px;width:350px;height:15px;border-radius:2px;border:1px solid #A4B8DC;border-left:2px solid #96A8C8;background:linear-gradient(#F4F8FE,#DAE6F8 40%,#BCCEE8)"></div>
<div class="a" style="left:1112px;top:798px;width:17px;height:15px;border-radius:2px;border:1px solid #A4B8DC;background:linear-gradient(#F4F8FE,#DAE6F8 40%,#BCCEE8)"></div>
<div class="a" style="left:1134px;top:797px;width:1px;height:16px;background:#000"></div>
<div class="a" style="left:1135px;top:797px;width:15px;height:16px;background:#EBEAEF"></div>
<svg style="left:0;top:0" width="1152" height="864">
<path d="M699 802l-3.5 3.5 3.5 3.5" fill="none" stroke="#4A5468" stroke-width="2"/>
<path d="M1118 802l3.5 3.5-3.5 3.5" fill="none" stroke="#4A5468" stroke-width="2"/>
<path d="M876.5 803v6M878.5 803v6M880.5 803v6M882.5 803v6" stroke="#6A7898"/>
</svg>
<div class="a" style="left:0;top:813px;width:1152px;height:21px;background:#EBEAEF;border-top:1px solid #E0DFE4"></div>
<div class="a" style="left:0;top:814px;width:1152px;height:1px;background:#FDFDFE"></div>
<div class="a" style="left:0;top:833px;width:1152px;height:1px;background:#F8F5F5"></div>
<div class="s" style="left:4px;top:819px;letter-spacing:0.6px">Готово</div>
<div class="a" style="left:826px;top:818px;width:35px;height:15px;border:1px solid #DEDDE3;border-right-color:#F6F6F8;border-bottom-color:#F6F6F8"></div>
<div class="a" style="left:861px;top:818px;width:113px;height:15px;border:1px solid #DEDDE3;border-right-color:#F6F6F8;border-bottom-color:#F6F6F8"></div>
<div class="a" style="left:974px;top:818px;width:27px;height:15px;border:1px solid #DEDDE3;border-right-color:#F6F6F8;border-bottom-color:#F6F6F8"></div>
<div class="a" style="left:1001px;top:818px;width:58px;height:15px;border:1px solid #DEDDE3;border-right-color:#F6F6F8;border-bottom-color:#F6F6F8"></div>
<div class="a" style="left:1059px;top:818px;width:29px;height:15px;border:1px solid #DEDDE3;border-right-color:#F6F6F8;border-bottom-color:#F6F6F8"></div>
<div class="a" style="left:1088px;top:818px;width:28px;height:15px;border:1px solid #DEDDE3;border-right-color:#F6F6F8;border-bottom-color:#F6F6F8"></div>
<div class="a" style="left:1116px;top:818px;width:33px;height:15px;border:1px solid #DEDDE3;border-right-color:#F6F6F8;border-bottom-color:#F6F6F8"></div>
<div class="s" style="left:1033px;top:819px">NUM</div>
<div class="a" style="left:0;top:834px;width:1152px;height:30px;background:linear-gradient(#1E48A8 0,#1E48A8 1px,#8EC4F0 1px,#7CB8EC 3px,#6CA8EA 10px,#5E9AE4 15.9px,#3C7CDC 16px,#3068D0 22px,#2854C0 28px,#2452B8 30px)"></div>
<div class="a" style="left:0;top:834px;width:98px;height:30px;border-radius:0 15px 15px 0/0 15px 15px 0;background:#2A5A30"></div>
<div class="a" style="left:0;top:835px;width:96px;height:29px;border-radius:0 14px 14px 0/0 14px 14px 0;background:linear-gradient(#E8F4E8 0,#9CD09C 1px,#7CC47C 3px,#60B660 8px,#50AC50 14.9px,#189A18 15px,#14A814 20px,#08C008 26px,#00C800 29px);box-shadow:inset -1px 0 0 #D0ECD0"></div>
<svg style="left:0;top:0" width="1152" height="864">
<g transform="translate(2,0)"><path d="M12 841c3-1 5 0 7 1l-2 6c-2-1-4-2-7-1z" fill="#F05A24"/>
<path d="M20 842c2 1 5 2 8 1l-2 6c-3 1-6 0-8-1z" fill="#7CC43A"/>
<path d="M10 848c3-1 5 0 7 1l-2 6c-2-1-4-2-7-1z" fill="#2A8AF0"/>
<path d="M18 849c2 1 5 2 8 1l-2 6c-3 1-6 0-8-1z" fill="#F8C820"/></g>
</svg>
<div class="t" style="left:34px;top:839px;color:#fff;font-weight:bold;font-style:italic;font-size:17px;line-height:20px;text-shadow:1px 1px 1px #2A5A2A">пуск</div>
<div class="a" style="left:106px;top:838px;width:98px;height:24px;border-radius:3px;border:1px solid #5A78C0;background:linear-gradient(#80BCF2 0,#6AAAEE 30%,#4A8AE2 50%,#3470D4 60%,#2C60C8 90%,#1C3C98)"></div>
<div class="s" style="left:134px;top:842px;color:#fff;letter-spacing:0.3px">Поисков...</div>
<svg style="left:115px;top:841px" width="16" height="16"><rect x="0" y="0" width="16" height="16" fill="#2A7A9A"/><path d="M1 4h5l1 2h7v9H1z" fill="#F0A030"/><circle cx="7" cy="8" r="3.5" fill="#BDE8F8" stroke="#705020"/><path d="M9.5 10.5l4 4" stroke="#E8B050" stroke-width="2"/></svg>
<div class="a" style="left:206px;top:838px;width:98px;height:24px;border-radius:3px;border:1px solid #5A78C0;background:linear-gradient(#80BCF2 0,#6AAAEE 30%,#4A8AE2 50%,#3470D4 60%,#2C60C8 90%,#1C3C98)"></div>
<div class="s" style="left:234px;top:842px;color:#fff;letter-spacing:0.3px">Расчетн...</div>
<svg style="left:215px;top:841px" width="16" height="16"><path d="M3.5 1.5h8l3 3v11h-11z" fill="#F4F6FA" stroke="#6A7A98"/><path d="M6 7h6M6 9h6M6 11h6M6 13h6" stroke="#8AA0C8"/><rect x="0.5" y="2.5" width="9" height="8" fill="#1E3C9A" stroke="#0A1A5A"/><path d="M1.5 4l1.5 5 1.5-4 1.5 4 1.5-5" fill="none" stroke="#fff" stroke-width="1.1"/></svg>
<div class="a" style="left:307px;top:838px;width:98px;height:24px;border-radius:3px;border:1px solid #5A78C0;background:linear-gradient(#80BCF2 0,#6AAAEE 30%,#4A8AE2 50%,#3470D4 60%,#2C60C8 90%,#1C3C98)"></div>
<div class="s" style="left:335px;top:842px;color:#fff;letter-spacing:0.3px">Дороши...</div>
<svg style="left:316px;top:841px" width="16" height="16"><path d="M1 4h5l1 2h8v8H1z" fill="#F0C850" stroke="#A07820"/><path d="M1 7h14l-1 7H1z" fill="#FFE070" stroke="#A07820"/></svg>
<div class="a" style="left:407px;top:838px;width:98px;height:24px;border-radius:3px;border:1px solid #5A78C0;background:linear-gradient(#80BCF2 0,#6AAAEE 30%,#4A8AE2 50%,#3470D4 60%,#2C60C8 90%,#1C3C98)"></div>
<div class="s" style="left:435px;top:842px;color:#fff;letter-spacing:0.3px">7122711 ...</div>
<svg style="left:416px;top:841px" width="16" height="16"><path d="M3.5 1.5h8l3 3v11h-11z" fill="#F4F6FA" stroke="#6A7A98"/><path d="M6 7h6M6 9h6M6 11h6M6 13h6" stroke="#8AA0C8"/><rect x="0.5" y="2.5" width="9" height="8" fill="#1E3C9A" stroke="#0A1A5A"/><path d="M1.5 4l1.5 5 1.5-4 1.5 4 1.5-5" fill="none" stroke="#fff" stroke-width="1.1"/></svg>
<div class="a" style="left:508px;top:838px;width:98px;height:24px;border-radius:3px;border:1px solid #5A78C0;background:linear-gradient(#80BCF2 0,#6AAAEE 30%,#4A8AE2 50%,#3470D4 60%,#2C60C8 90%,#1C3C98)"></div>
<div class="s" style="left:536px;top:842px;color:#fff;letter-spacing:0.3px">Докумен...</div>
<svg style="left:517px;top:841px" width="16" height="16"><path d="M3.5 1.5h8l3 3v11h-11z" fill="#F4F6FA" stroke="#6A7A98"/><path d="M6 7h6M6 9h6M6 11h6M6 13h6" stroke="#8AA0C8"/><rect x="0.5" y="2.5" width="9" height="8" fill="#1E3C9A" stroke="#0A1A5A"/><path d="M1.5 4l1.5 5 1.5-4 1.5 4 1.5-5" fill="none" stroke="#fff" stroke-width="1.1"/></svg>
<div class="a" style="left:608px;top:838px;width:98px;height:24px;border-radius:3px;border:1px solid #5A78C0;background:linear-gradient(#80BCF2 0,#6AAAEE 30%,#4A8AE2 50%,#3470D4 60%,#2C60C8 90%,#1C3C98)"></div>
<div class="s" style="left:636px;top:842px;color:#fff;letter-spacing:0.3px">5112603...</div>
<svg style="left:617px;top:841px" width="16" height="16"><path d="M3.5 1.5h8l3 3v11h-11z" fill="#F4F6FA" stroke="#6A7A98"/><path d="M6 7h6M6 9h6M6 11h6M6 13h6" stroke="#8AA0C8"/><rect x="0.5" y="2.5" width="9" height="8" fill="#1E3C9A" stroke="#0A1A5A"/><path d="M1.5 4l1.5 5 1.5-4 1.5 4 1.5-5" fill="none" stroke="#fff" stroke-width="1.1"/></svg>
<div class="a" style="left:709px;top:838px;width:98px;height:24px;border-radius:3px;border:1px solid #0F2466;background:linear-gradient(#2A4A96 0,#3458A8 3px,#22428E 10px,#1C3A84 14px,#1A3A88 80%,#1E4090)"></div>
<div class="s" style="left:737px;top:842px;color:#fff;letter-spacing:0.3px">Microsoft...</div>
<svg style="left:718px;top:841px" width="16" height="16"><rect x="0.5" y="0.5" width="15" height="15" fill="#E8F4E8" stroke="#2A6A2A"/><path d="M3 3h3l2 3 2-3h3l-3.5 5 3.5 5h-3l-2-3-2 3H3l3.5-5z" fill="#1A8A1A"/></svg>
<div class="a" style="left:810px;top:838px;width:98px;height:24px;border-radius:3px;border:1px solid #5A78C0;background:linear-gradient(#80BCF2 0,#6AAAEE 30%,#4A8AE2 50%,#3470D4 60%,#2C60C8 90%,#1C3C98)"></div>
<div class="s" style="left:838px;top:842px;color:#fff;letter-spacing:0.3px">Всего ра...</div>
<svg style="left:819px;top:841px" width="16" height="16"><path d="M1 5h14v9H1z" fill="#F8E070" stroke="#A08020"/><path d="M4 2h8v6H4z" fill="#fff" stroke="#888"/><path d="M1 5l7 5 7-5" fill="#F0D050" stroke="#A08020"/></svg>
<div class="a" style="left:911px;top:838px;width:98px;height:24px;border-radius:3px;border:1px solid #5A78C0;background:linear-gradient(#80BCF2 0,#6AAAEE 30%,#4A8AE2 50%,#3470D4 60%,#2C60C8 90%,#1C3C98)"></div>
<div class="s" style="left:939px;top:842px;color:#fff;letter-spacing:0.3px">В Конта...</div>
<svg style="left:920px;top:841px" width="16" height="16"><path d="M3.5 1.5h8l3 3v11h-11z" fill="#F4F6FA" stroke="#6A7A98"/><circle cx="6.5" cy="9" r="5" fill="none" stroke="#2A7AE0" stroke-width="2"/><path d="M3 9h7" stroke="#2A7AE0" stroke-width="1.5"/><path d="M0.5 12c3-6 9-9 13-9" fill="none" stroke="#F0B020" stroke-width="1.3"/></svg>
<div class="a" style="left:1059px;top:834px;width:93px;height:30px;background:linear-gradient(#1E6AB8 0,#1E6AB8 1px,#E4F2FC 1px,#B8DCF8 8px,#94C4F0 20px,#88B8EC)"></div>
<div class="a" style="left:1022px;top:842px;width:16px;height:16px;background:#2E5CB8"></div>
<div class="s" style="left:1023px;top:843px;color:#fff;font-size:11px">RU</div>
<div class="a" style="left:1050px;top:841px;width:18px;height:18px;border-radius:50%;background:radial-gradient(circle at 50% 40%,#fff,#C8DCF4 60%,#90B0E0);border:1px solid #A8C4E8"></div>
<svg style="left:0;top:0" width="1152" height="864">
<path d="M1061 846l-3.5 3.5 3.5 3.5" fill="none" stroke="#2A4A98" stroke-width="1.6"/>
<g fill="#5AC82A" stroke="#2A8A1A" stroke-width="0.6"><circle cx="1077.5" cy="844" r="2.6"/><circle cx="1077.5" cy="853" r="2.6"/><circle cx="1073" cy="848.5" r="2.6"/><circle cx="1082" cy="848.5" r="2.6"/><circle cx="1074.3" cy="845.3" r="2.4"/><circle cx="1080.7" cy="845.3" r="2.4"/><circle cx="1074.3" cy="851.7" r="2.4"/><circle cx="1080.7" cy="851.7" r="2.4"/></g>
<circle cx="1077.5" cy="848.5" r="1.4" fill="#F8E020"/>
<circle cx="1096" cy="849" r="7.5" fill="#10C010" stroke="#0A6A0A"/>
<circle cx="1096" cy="849" r="4.5" fill="none" stroke="#003A00" stroke-width="1.4"/>
<circle cx="1096" cy="849" r="1.8" fill="none" stroke="#003A00" stroke-width="1.2"/>
</svg>
<div class="s" style="left:1111px;top:842px;color:#000">14:52</div>
<div class="a" style="left:353px;top:278px;width:445px;height:253px;border-radius:7px 7px 0 0;background:#2850B8"></div>
<div class="a" style="left:354px;top:279px;width:443px;height:251px;border-radius:6px 6px 0 0;background:#80B4E8"></div>
<div class="a" style="left:355px;top:280px;width:441px;height:249px;border-radius:5px 5px 0 0;background:#2A54B8"></div>
<div class="a" style="left:355px;top:279px;width:441px;height:27px;border-radius:6px 6px 0 0;background:linear-gradient(#96CCF4 0,#80BEEE 2px,#70AEE8 5px,#62A0E6 10px,#5A96DC 12.9px,#3A80D0 13px,#3472C8 18px,#2C60BC 24px,#2A56B4 27px)"></div>
<div class="a" style="left:355px;top:306px;width:441px;height:1px;background:#1E3C98"></div>
<div class="a" style="left:356px;top:307px;width:439px;height:221px;background:#FCF8F8"></div>
<div class="a" style="left:357px;top:307px;width:438px;height:220px;background:#EBEAEF"></div>
<div class="t" style="left:359px;top:286px;color:#fff;font-weight:bold;font-size:13px;letter-spacing:-0.22px;text-shadow:1px 1px 0 #1A3A8A">Пользовательский автофильтр</div>
<div class="a" style="left:773px;top:284px;width:20px;height:20px;border:1px solid #F0C8B8;border-radius:3px;background:linear-gradient(#E4A088,#DC7A58 35%,#D85020 50%,#D45828 70%,#E8A088)"></div>
<svg style="left:0;top:0" width="1152" height="864"><path d="M778 289l10 10M788 289l-10 10" stroke="#fff" stroke-width="2.4"/></svg>
<div class="s" style="left:361px;top:314px;letter-spacing:0.24px">Показать только те строки, значения которых:</div>
<div class="s" style="left:361px;top:330px;color:#2A5CAA;letter-spacing:-0.1px">Доля компенсация на проезд в общей сумме компенсаций, в %</div>
<div class="a" style="left:687px;top:336px;width:102px;height:1px;background:#C4C4CC"></div>
<div class="a" style="left:362px;top:346px;width:209px;height:22px;background:#fff;border:1px solid #A5A5AD"></div>
<div class="a" style="left:553px;top:347px;width:17px;height:20px;border:1px solid #B4C4E0;border-radius:2px;background:linear-gradient(#F8FBFF,#E4EEFC 30%,#C4D6EE)"></div>
<svg style="left:0;top:0" width="1152" height="864"><path d="M558 355l3.5 3.5 3.5-3.5" fill="none" stroke="#4A5060" stroke-width="2"/></svg>
<div class="s" style="left:365px;top:350px">больше</div>
<div class="a" style="left:580px;top:346px;width:209px;height:20px;background:#fff;border:1px solid #A5A5AD"></div>
<div class="a" style="left:771px;top:347px;width:17px;height:18px;border:1px solid #B4C4E0;border-radius:2px;background:linear-gradient(#F8FBFF,#E4EEFC 30%,#C4D6EE)"></div>
<svg style="left:0;top:0" width="1152" height="864"><path d="M776 354l3.5 3.5 3.5-3.5" fill="none" stroke="#4A5060" stroke-width="2"/></svg>
<div class="s" style="left:583px;top:349px">3</div>
<div class="a" style="left:362px;top:417px;width:209px;height:22px;background:#fff;border:1px solid #A5A5AD"></div>
<div class="a" style="left:553px;top:418px;width:17px;height:20px;border:1px solid #B4C4E0;border-radius:2px;background:linear-gradient(#F8FBFF,#E4EEFC 30%,#C4D6EE)"></div>
<svg style="left:0;top:0" width="1152" height="864"><path d="M558 426l3.5 3.5 3.5-3.5" fill="none" stroke="#4A5060" stroke-width="2"/></svg>
<div class="s" style="left:365px;top:421px">меньше</div>
<div class="a" style="left:580px;top:417px;width:209px;height:20px;background:#fff;border:1px solid #A5A5AD"></div>
<div class="a" style="left:771px;top:418px;width:17px;height:18px;border:1px solid #B4C4E0;border-radius:2px;background:linear-gradient(#F8FBFF,#E4EEFC 30%,#C4D6EE)"></div>
<svg style="left:0;top:0" width="1152" height="864"><path d="M776 425l3.5 3.5 3.5-3.5" fill="none" stroke="#4A5060" stroke-width="2"/></svg>
<div class="s" style="left:583px;top:420px">10</div>
<div class="a" style="left:596px;top:422px;width:1px;height:12px;background:#000"></div>
<div class="s" style="left:361px;top:454px;letter-spacing:0.05px">Знак вопроса "?" обозначает один любой знак</div>
<div class="s" style="left:361px;top:470px;letter-spacing:0.16px">Знак "*" обозначает последовательность любых знаков</div>
<div class="a" style="left:428px;top:392px;width:13px;height:13px;border:1px solid #1C5180;border-radius:50%;background:linear-gradient(135deg,#DCDCD8,#fff)"></div>
<svg style="left:0;top:0" width="1152" height="864"><path d="M434.5 395.5l3 3-3 3-3-3z" fill="#21A121"/></svg>
<div class="s" style="left:445px;top:392px"><u>И</u></div>
<div class="a" style="left:464px;top:392px;width:13px;height:13px;border:1px solid #1C5180;border-radius:50%;background:linear-gradient(135deg,#DCDCD8,#fff)"></div>
<div class="s" style="left:480px;top:392px">И<u>Л</u>И</div>
<div class="a" style="left:631px;top:499px;width:73px;height:21px;border:1px solid #2A4A88;border-radius:3px;background:linear-gradient(#FFFFFF,#F0F2F8 40%,#C8D0E4);box-shadow:inset 0 0 0 1px #5A8AE0, inset 0 0 0 2px #A8C4F0"></div>
<div class="s" style="left:631px;top:502px;width:73px;text-align:center">OK</div>
<div class="a" style="left:715px;top:499px;width:73px;height:21px;border:1px solid #2A4A88;border-radius:3px;background:linear-gradient(#FFFFFF,#F0F2F8 40%,#C8D0E4)"></div>
<div class="s" style="left:715px;top:502px;width:73px;text-align:center">Отмена</div>
</body></html>
